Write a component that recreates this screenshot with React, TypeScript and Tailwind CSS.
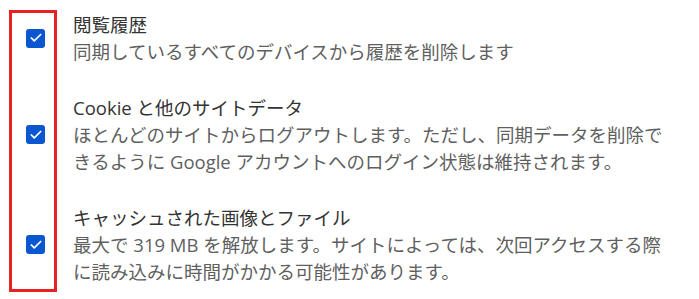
import { Check } from 'lucide-react';

const items = [
    {
        title: '閲覧履歴',
        lines: ['同期しているすべてのデバイスから履歴を削除します'],
    },
    {
        title: 'Cookie と他のサイトデータ',
        lines: [
            'ほとんどのサイトからログアウトします。ただし、同期データを削除で',
            'きるように Google アカウントへのログイン状態は維持されます。',
        ],
    },
    {
        title: 'キャッシュされた画像とファイル',
        lines: [
            '最大で 319 MB を解放します。サイトによっては、次回アクセスする際',
            'に読み込みに時間がかかる可能性があります。',
        ],
    },
];

function Checkbox() {
    return (
        <div className="flex h-[19px] w-[19px] shrink-0 items-center justify-center rounded-[3px] bg-[#0b57d0]">
            <Check className="h-[14px] w-[14px] text-white" strokeWidth={3} />
        </div>
    );
}

export default function App() {
    return (
        <div className="relative h-[299px] w-[699px] bg-white font-['Open_Sans','Noto_Sans_CJK_JP',sans-serif] text-[18.5px] leading-[27px]">
            <div className="flex flex-col gap-[29px] pt-[11px]">
                {items.map((item) => (
                    <div key={item.title} className="flex items-center gap-[28px] pl-[26px]">
                        <Checkbox />
                        <div className="flex flex-col">
                            <div className="text-[#333333]">{item.title}</div>
                            {item.lines.map((line) => (
                                <div key={line} className="whitespace-nowrap text-[#5f5f5f]">
                                    {line}
                                </div>
                            ))}
                        </div>
                    </div>
                ))}
            </div>
            {/* red highlight around the checkboxes */}
            <div className="pointer-events-none absolute left-[9px] top-[10px] h-[282px] w-[48px] border-[3px] border-[#e62222]" />
        </div>
    );
}
